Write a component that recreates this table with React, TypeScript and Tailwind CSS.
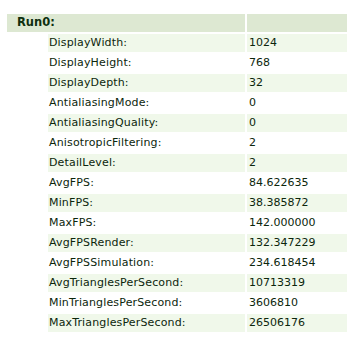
import React from "react";

const rows: [string, string][] = [
  ["DisplayWidth:", "1024"],
  ["DisplayHeight:", "768"],
  ["DisplayDepth:", "32"],
  ["AntialiasingMode:", "0"],
  ["AntialiasingQuality:", "0"],
  ["AnisotropicFiltering:", "2"],
  ["DetailLevel:", "2"],
  ["AvgFPS:", "84.622635"],
  ["MinFPS:", "38.385872"],
  ["MaxFPS:", "142.000000"],
  ["AvgFPSRender:", "132.347229"],
  ["AvgFPSSimulation:", "234.618454"],
  ["AvgTrianglesPerSecond:", "10713319"],
  ["MinTrianglesPerSecond:", "3606810"],
  ["MaxTrianglesPerSecond:", "26506176"],
];

export default function App() {
  return (
    <div
      className="w-[348px] h-[349px] bg-white pt-[14px] pl-[7px] text-[#0c260c]"
      style={{ fontFamily: '"DejaVu Sans", Verdana, sans-serif' }}
    >
      <div className="grid grid-cols-[39px_197px_100px] gap-[2px]">
        <div className="col-span-2 h-[18px] bg-[#dde8d2] flex items-center pl-[10px] text-[11.5px] font-bold text-[#0f300f]">
          Run0:
        </div>
        <div className="h-[18px] bg-[#dde8d2]" />
        {rows.map(([k, v], i) => (
          <React.Fragment key={k}>
            <div />
            <div
              className={`h-[18px] flex items-center pl-[1px] text-[11px] tracking-[0.15px] ${i % 2 === 0 ? "bg-[#f0f8ea]" : "bg-white"}`}
            >
              {k}
            </div>
            <div
              className={`h-[18px] flex items-center pl-[2px] text-[11px] ${i % 2 === 0 ? "bg-[#f0f8ea]" : "bg-white"}`}
            >
              {v}
            </div>
          </React.Fragment>
        ))}
      </div>
    </div>
  );
}
